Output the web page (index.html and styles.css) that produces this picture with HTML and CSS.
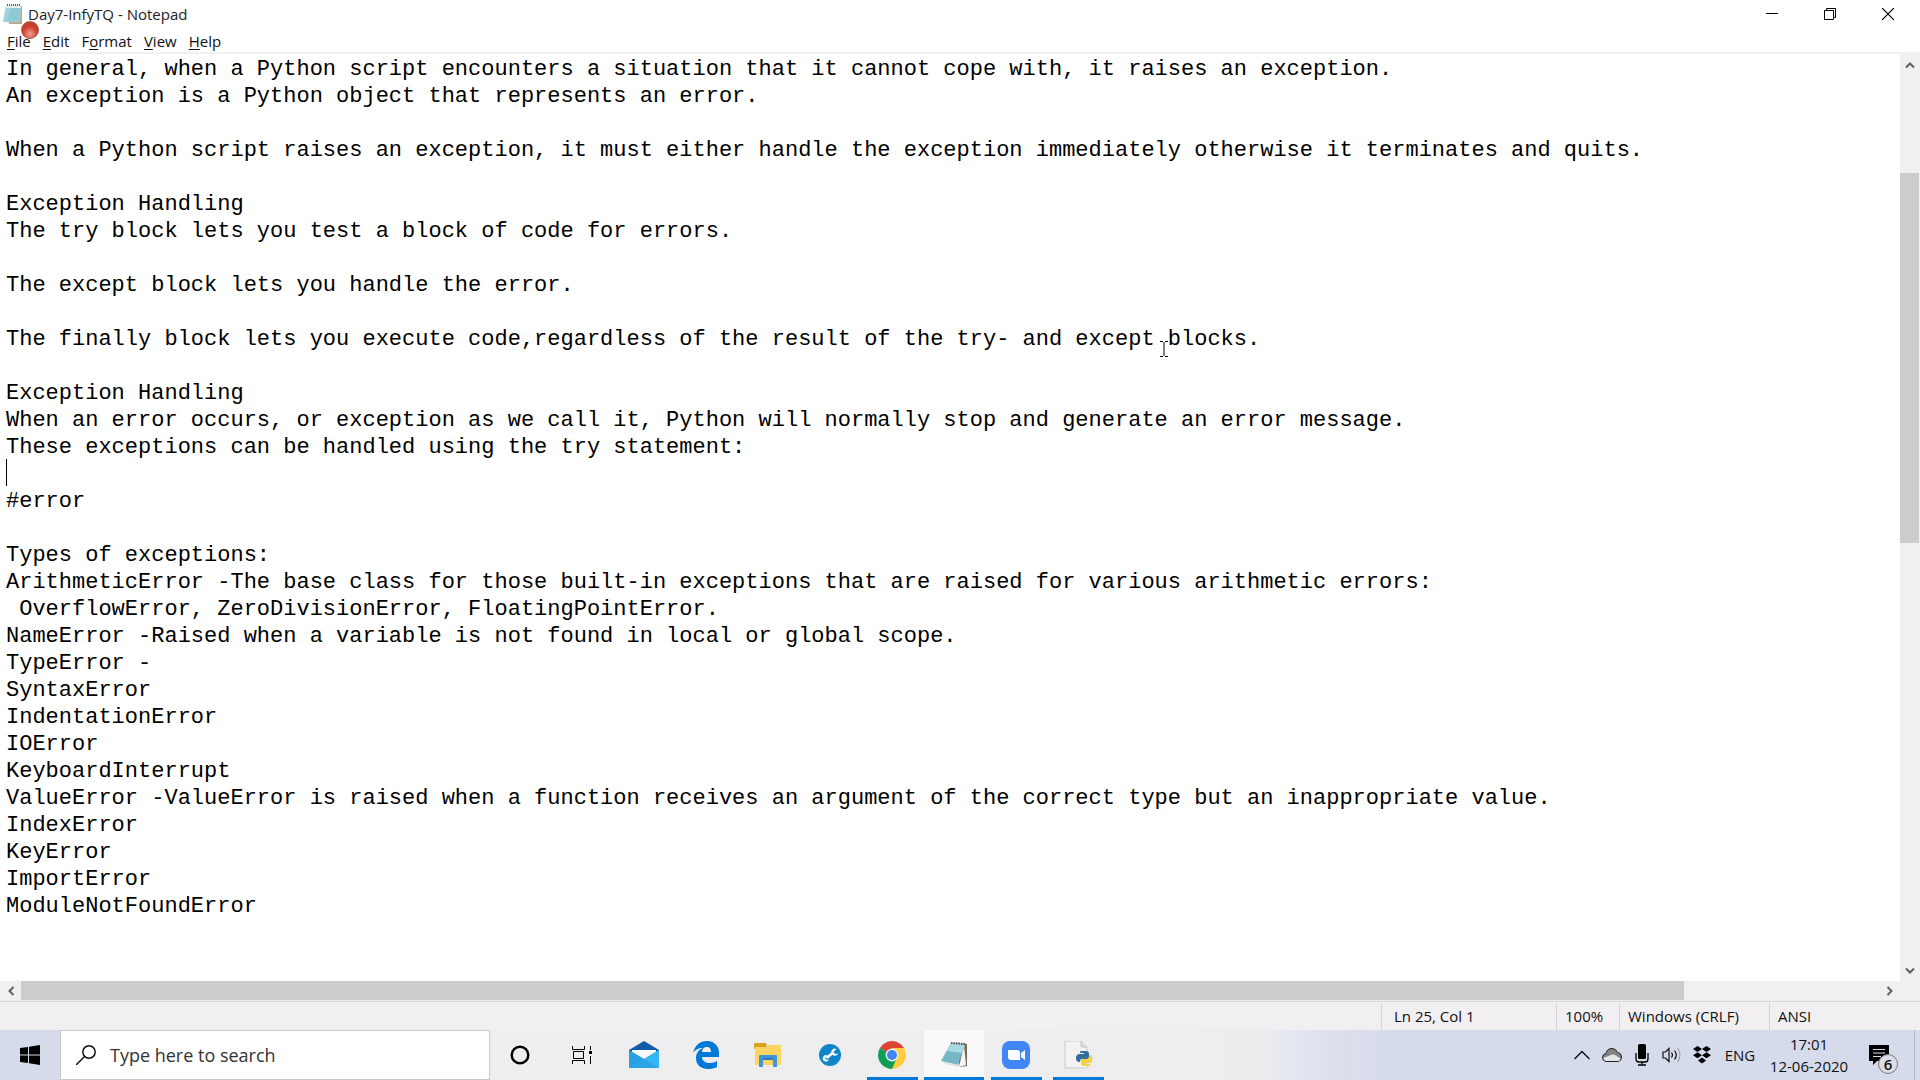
FILE: index.html
```html
<!DOCTYPE html>
<html lang="en">
<head>
<meta charset="utf-8">
<title>Day7-InfyTQ - Notepad</title>
<link rel="stylesheet" href="styles.css">
</head>
<body>
<div class="desktop">
  <main class="window">
    <header class="titlebar">
      <svg class="app-icon" width="20" height="20" viewBox="0 0 20 20" aria-hidden="true">
        <path d="M4 2h15v18H6z" fill="#b9ab8c"/>
        <path d="M3 1h15l-1 17H0z" fill="#9fd3df"/>
        <path d="M3 1h15v3H3z" fill="#dfeff2"/>
        <path d="M8 4h9l-1 13H4z" fill="#83c3d2" opacity=".6"/>
        <path d="M4 1h14" stroke="#55636a" stroke-width="2" stroke-dasharray="1 1"/>
      </svg>
      <h1 class="title">Day7-InfyTQ - Notepad</h1>
      <span class="record-dot"></span>
      <div class="window-controls">
        <button class="control" aria-label="Minimize"><svg width="12" height="12" viewBox="0 0 12 12"><path d="M0 5.5h12" stroke="#000"/></svg></button>
        <button class="control" aria-label="Restore"><svg width="12" height="12" viewBox="0 0 12 12" fill="none" stroke="#000"><path d="M.5 2.500h9v9h-9z"/><path d="M2.500 2.500v-2h9v9h-2"/></svg></button>
        <button class="control" aria-label="Close"><svg width="12" height="12" viewBox="0 0 12 12"><path d="M0 0l12 12M12 0L0 12" stroke="#000" stroke-width="1.200"/></svg></button>
      </div>
    </header>
    <nav class="menubar">
      <button class="menu"><u>F</u>ile</button>
      <button class="menu"><u>E</u>dit</button>
      <button class="menu">F<u>o</u>rmat</button>
      <button class="menu"><u>V</u>iew</button>
      <button class="menu"><u>H</u>elp</button>
    </nav>
    <section class="editor">
      <div class="page">
        <textarea class="text" aria-label="Text editor" wrap="off" spellcheck="false">In general, when a Python script encounters a situation that it cannot cope with, it raises an exception.
An exception is a Python object that represents an error.

When a Python script raises an exception, it must either handle the exception immediately otherwise it terminates and quits.

Exception Handling
The try block lets you test a block of code for errors.

The except block lets you handle the error.

The finally block lets you execute code,regardless of the result of the try- and except blocks.

Exception Handling
When an error occurs, or exception as we call it, Python will normally stop and generate an error message.
These exceptions can be handled using the try statement:

#error

Types of exceptions:
ArithmeticError -The base class for those built-in exceptions that are raised for various arithmetic errors:
 OverflowError, ZeroDivisionError, FloatingPointError.
NameError -Raised when a variable is not found in local or global scope.
TypeError -
SyntaxError
IndentationError
IOError
KeyboardInterrupt
ValueError -ValueError is raised when a function receives an argument of the correct type but an inappropriate value.
IndexError
KeyError
ImportError
ModuleNotFoundError</textarea>
        <span class="caret"></span>
        <svg class="pointer" width="8" height="16" viewBox="0 0 8 16" aria-hidden="true"><path d="M0 .5h3M5 .5h3M4 1v14M0 15.500h3M5 15.500h3" stroke="#000" fill="none"/></svg>
      </div>
      <div class="scroll vertical">
        <button class="arrow" aria-label="Scroll up"><svg width="10" height="8" viewBox="0 0 10 8"><path d="M1 6.500l4-4 4 4" class="chev"/></svg></button>
        <div class="track"><div class="thumb"></div></div>
        <button class="arrow" aria-label="Scroll down"><svg width="10" height="8" viewBox="0 0 10 8"><path d="M1 1.500l4 4 4-4" class="chev"/></svg></button>
      </div>
      <div class="scroll horizontal">
        <button class="arrow" aria-label="Scroll left"><svg width="8" height="10" viewBox="0 0 8 10"><path d="M6.500 1l-4 4 4 4" class="chev"/></svg></button>
        <div class="track"><div class="thumb"></div></div>
        <button class="arrow" aria-label="Scroll right"><svg width="8" height="10" viewBox="0 0 8 10"><path d="M1.500 1l4 4-4 4" class="chev"/></svg></button>
      </div>
    </section>
    <footer class="status">
      <span class="cell position">Ln 25, Col 1</span>
      <span class="cell zoom">100%</span>
      <span class="cell ending">Windows (CRLF)</span>
      <span class="cell encoding">ANSI</span>
    </footer>
  </main>
  <div class="taskbar">
    <button class="start" aria-label="Start"><svg width="20" height="20" viewBox="0 0 20 20"><path d="M0 3l8-1v7.500H0zM9 1.800L20 0v9.500H9zM0 10.500h8V18l-8-1zM9 10.500h11V20L9 18.200z"/></svg></button>
    <label class="search">
      <svg width="20" height="20" viewBox="0 0 20 20" fill="none" stroke="#111" stroke-width="1.500"><circle cx="13" cy="7" r="6.200"/><path d="M8.500 11.500L0 20"/></svg>
      <input class="search-input" type="text" placeholder="Type here to search" aria-label="Search">
    </label>
    <div class="apps">
      <button class="app" aria-label="Cortana"><svg width="20" height="20" viewBox="0 0 20 20"><circle cx="10" cy="10" r="8.300" fill="none" stroke="#000" stroke-width="2.400"/></svg></button>
      <button class="app" aria-label="Task view"><svg width="20" height="20" viewBox="0 0 20 20" fill="none" stroke="#000"><path d="M.5 1v3.500h12V1M.5 19v-3.500h12V19M1.500 6.500h10v7h-10zM18.500 1v4M18.500 11v8"/><path d="M17 6h3v3h-3z" fill="#000" stroke="none"/></svg></button>
      <button class="app" aria-label="Mail"><svg width="30" height="28" viewBox="0 0 30 28"><path d="M0 9L15 0l15 9v9H0z" fill="#0f5ca8"/><path d="M3 9h24v12H3z" fill="#f7fbfd"/><path d="M0 9l15 9 15-9v18H0z" fill="#2fa9ea"/><path d="M0 27l15-9 15-9v18z" fill="#35b5f2"/><path d="M0 9l30 18H0z" fill="#2396dd" opacity=".5"/></svg></button>
      <button class="app" aria-label="Edge"><svg width="26" height="28" viewBox="0 0 26 28"><path d="M0 12C2 4 7 0 14 0c8 0 12 6 12 12v4H9c0 4 4 6 8 6 3 0 5-1 7-2v6c-3 1.500-6 2-9 2C8 28 3 24 3 17c0-4 2-8 7-10-5 0-8 2-10 5zM9 11h9c0-3-1-5-4-5s-5 2-5 5z" fill="#0078d7"/></svg></button>
      <button class="app" aria-label="File Explorer"><svg width="28" height="24" viewBox="0 0 28 24"><path d="M0 1q0-1 1-1h11l1 3h-1v3H0z" fill="#daa21c"/><path d="M1 4h11l2-2h13v20H1z" fill="#fcd462"/><path d="M5 24V13q0-1 1-1h16q1 0 1 1v11h-4v-7H9v7z" fill="#3f94d8"/><path d="M9 15h10v2H9z" fill="#2d79bc"/></svg></button>
      <button class="app" aria-label="Device support"><svg width="22" height="22" viewBox="0 0 22 22"><circle cx="11" cy="11" r="11" fill="#0c86c8"/><path d="M7.500 14l6-5" stroke="#fff" stroke-width="2.800"/><path d="M8.500 11.500a3.200 3.200 0 1 0 1.500 4l-2.800.3-1.200-1.800zM17.500 5a3.500 3.500 0 1 0 1.500 4.500l-3 .5-1.500-2z" fill="#fff"/></svg></button>
      <button class="app running" aria-label="Chrome"><svg width="28" height="28" viewBox="0 0 28 28"><path d="M14 14L1.900 7A14 14 0 0 1 26.100 7z" fill="#db4437"/><path d="M14 14L1.900 7A14 14 0 0 0 14 28l6-10.500z" fill="#0f9d58"/><path d="M14 14h6l-6 14A14 14 0 0 0 26.100 7H14z" fill="#ffcd40"/><circle cx="14" cy="14" r="6.400" fill="#f1f1f1"/><circle cx="14" cy="14" r="5" fill="#4285f4"/></svg></button>
      <button class="app running active" aria-label="Notepad"><svg width="28" height="28" viewBox="0 0 28 28"><path d="M12 2l15 1v22l-7 1z" fill="#766b59"/><path d="M24 4l2 20-7 2z" fill="#f4f4f2"/><path d="M11 2l14 2-7 20-17-4z" fill="#74b8c8"/><path d="M11 2l14 2-3 8-15-2z" fill="#a8d8e0"/><path d="M1 20l17 4 1 2-14-3z" fill="#dfe4e4"/><path d="M11 2l15 1" stroke="#5b5b58" stroke-width="2" stroke-dasharray="1.500 1"/></svg></button>
      <button class="app running" aria-label="Zoom"><svg width="28" height="28" viewBox="0 0 28 28"><rect width="28" height="28" rx="8" fill="#4087f5"/><path d="M6 9h9q3 0 3 3v7H9q-3 0-3-3zM19 12l4-3v10l-4-3z" fill="#fff"/></svg></button>
      <button class="app running" aria-label="Python file"><svg width="28" height="28" viewBox="0 0 28 28"><path d="M1 0h16l6 6v21H1z" fill="#f3f3f4" stroke="#c9c9cd"/><path d="M17 0v6h6" fill="#dcdce0" stroke="#c4c4c8"/><path d="M17 10h5q3 0 3 3v3q0 2-3 2h-4q-2 0-2 3h-1q-3 0-3-4t4-4h4v-1h-4q0-2 1-2z" fill="#316d9e"/><path d="M25 14h1q3 0 3 4t-3 4h-4v1h4q0 2-1 2h-5q-3 0-3-2v-3q0-2 3-2h3q2 0 2-3z" fill="#f8d13f"/></svg></button>
    </div>
    <div class="tray">
      <button class="tray-item" aria-label="Show hidden icons"><svg width="16" height="10" viewBox="0 0 16 10" fill="none" stroke="#111" stroke-width="1.500"><path d="M.5 9L8 1.500 15.500 9"/></svg></button>
      <button class="tray-item" aria-label="OneDrive"><svg width="20" height="16" viewBox="0 0 20 16"><path d="M4 14.500Q.5 14 .5 10.500T4 6.500q1-5 6-5 4 0 5.500 4 4 .5 4 4.500T16 14.500z" fill="#858585" stroke="#222"/><path d="M4 14q-2.500-.5-2.500-3L9 8q2-1 4 0l5.500 3.500q-.5 2.500-2.500 2.500z" fill="#e7e7e7"/></svg></button>
      <button class="tray-item" aria-label="Microphone"><svg width="14" height="22" viewBox="0 0 14 22"><rect x="3" width="8" height="15" rx="1.500"/><path d="M1 9v6q0 3 3 3h6q3 0 3-3V9M7 18v3M3 21h8" fill="none" stroke="#000" stroke-width="1.300"/></svg></button>
      <button class="tray-item" aria-label="Volume"><svg width="20" height="18" viewBox="0 0 20 18" fill="none" stroke="#111" stroke-width="1.200"><path d="M1 6h2.500L7 2.500v13L3.500 12H1zM9.500 6.500q2 2.500 0 5M12.500 4.500q3.500 4.500 0 9"/><path d="M15.500 2q5 7 0 14" stroke="#9fa3ae"/></svg></button>
      <button class="tray-item" aria-label="Dropbox"><svg width="18" height="18" viewBox="0 0 18 18"><path d="M4.500 0L9 3 4.500 6 0 3zM13.500 0L18 3l-4.500 3L9 3zM4.500 6.200L9 9.200l-4.500 3-4.500-3zM13.500 6.200l4.500 3-4.500 3-4.500-3zM9 11.500l4 3L9 17.500l-4-3z"/></svg></button>
      <button class="language">ENG</button>
      <button class="clock"><time>17:01</time><time>12-06-2020</time></button>
      <button class="notifications" aria-label="Notifications"><svg width="20" height="20" viewBox="0 0 20 20"><path d="M0 0h20v16H8l-4 4v-4H0z"/><path d="M4 4.500h12M4 8h12M4 11.500h8" stroke="#d5dbeb" stroke-width="1.200"/></svg><span class="badge">6</span></button>
    </div>
  </div>
</div>
</body>
</html>
```
FILE: styles.css
```css
* { box-sizing: border-box; }
body { margin: 0; background: #fff; color: #111; font: 15px/20px "Open Sans", sans-serif; }
button { padding: 0; border: 0; background: none; color: inherit; font: inherit; }
svg { display: block; flex: none; }
.desktop { display: flex; flex-direction: column; height: 100vh; }
.window { flex: 1; min-height: 0; display: flex; flex-direction: column; }

.titlebar { position: relative; display: flex; align-items: center; height: 30px; padding: 0 3px 2px; gap: 5px; }
.title { margin: 0; font-size: 15px; font-weight: 400; color: #222; }
.record-dot { position: absolute; left: 21px; top: 21px; width: 18px; height: 18px; border-radius: 50%; border: 1px solid #a45a50; background: radial-gradient(circle at 50% 75%, #f5a090, #d0402f 50%, #bb3628); }
.window-controls { display: flex; margin-left: auto; }
.control { width: 58px; height: 28px; display: grid; place-items: center; }
.menubar { display: flex; gap: 12px; height: 24px; padding: 0 7px; border-bottom: 2px solid #f2f1f2; }
.menu { height: 22px; }
.menu u { text-underline-offset: 2px; }

.editor { flex: 1; min-height: 0; display: grid; grid-template-columns: 1fr 20px; grid-template-rows: 1fr 20px; background: #f1eff2; }
.page { position: relative; background: #fff; }
.text { display: block; width: 100%; height: 100%; padding: 2px 6px 0; border: 0; outline: 0; resize: none; overflow: hidden; background: none; color: #000; font: 22px/27px "Liberation Mono", monospace; }
.caret { position: absolute; left: 6px; top: 405px; width: 1px; height: 27px; background: #000; }
.pointer { position: absolute; left: 1160px; top: 287px; }
.scroll { display: flex; }
.vertical { flex-direction: column; }
.track { flex: 1; display: flex; }
.vertical .track { flex-direction: column; padding-top: 98px; }
.horizontal .track { padding-right: 195px; }
.thumb { background: #cdcbce; }
.vertical .thumb { height: 47%; margin-right: 1px; }
.horizontal .thumb { flex: 1; margin-bottom: 1px; }
.arrow { width: 21px; height: 21px; display: grid; place-items: center; }
.vertical .arrow { width: 20px; }
.horizontal .arrow { height: 20px; }
.chev { fill: none; stroke: #606060; stroke-width: 2; }

.status { display: flex; justify-content: flex-end; height: 29px; padding-top: 1px; border-top: 1px solid #d9d7da; background: #f1eff2; line-height: 27px; }
.cell { padding-left: 8px; border-left: 1px solid #d4d2d6; font-size: 15px; white-space: nowrap; }
.position { width: 175px; padding-left: 12px; }
.zoom { width: 63px; }
.ending { width: 150px; }
.encoding { width: 151px; }

.taskbar { display: flex; height: 50px; background: linear-gradient(90deg, #efeef0 0, #ededee 66%, #e5e8f2 67%, #dcdeea 70%, #d5dbeb 73%); }
.start { width: 60px; display: grid; place-items: center; background: #d5dbeb; }
.search { width: 430px; display: flex; align-items: center; gap: 14px; padding: 0 15px; border: 1px solid #cac9cd; background: #fff; }
.search-input { flex: 1; min-width: 0; padding: 0; border: 0; outline: 0; background: none; font: 18px/24px "Open Sans", sans-serif; color: #333; }
.search-input::placeholder { color: #333; opacity: 1; }
.apps { display: flex; gap: 2px; }
.app { width: 60px; display: grid; place-items: center; border-bottom: 3px solid transparent; padding-top: 3px; }
.running { background: linear-gradient(#0078d7, #0078d7) center bottom / 51px 3px no-repeat border-box; }
.active { background: linear-gradient(#0078d7, #0078d7) bottom / 60px 3px no-repeat border-box, #f9f9fa; }
.tray { display: flex; align-items: center; margin-left: auto; }
.tray-item { width: 30px; height: 50px; display: grid; place-items: center; }
.language { width: 46px; }
.clock { width: 92px; display: flex; flex-direction: column; align-items: center; line-height: 22px; }
.notifications { position: relative; height: 50px; width: 60px; padding-left: 14px; display: flex; align-items: center; border-right: 1px solid #aeb4c5; margin-right: 5px; }
.badge { position: absolute; left: 23px; top: 24px; width: 20px; height: 20px; border: 1px solid #777; border-radius: 50%; background: #dcdde2; font-size: 15px; font-weight: 600; line-height: 18px; }
```
